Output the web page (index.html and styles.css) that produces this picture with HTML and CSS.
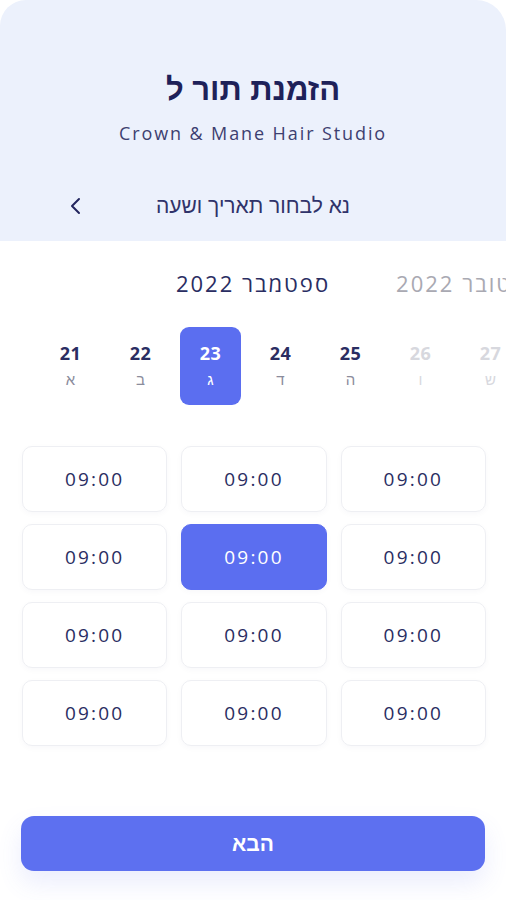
FILE: index.html
```html
<!DOCTYPE html>
<html lang="he" dir="rtl">
<head>
    <meta charset="UTF-8">
    <title>הזמנת תור</title>
    <link rel="stylesheet" href="styles.css">
</head>
<body>
<div class="card">
    <div class="head">
        <h1 class="title">הזמנת תור ל</h1>
        <p class="sub" dir="ltr">Crown &amp; Mane Hair Studio</p>
        <div class="nav">
            <span class="back">
                <svg width="14" height="18" viewBox="0 0 14 18"><path d="M10 2 L3 9 L10 16" fill="none" stroke="#23265e" stroke-width="2" stroke-linecap="round" stroke-linejoin="round"/></svg>
            </span>
            <span class="nav-text">נא לבחור תאריך ושעה</span>
            <span></span>
        </div>
    </div>

    <div class="months">
        <span></span>
        <span class="month current" dir="rtl">ספטמבר 2022</span>
        <span class="next"><span class="month" dir="rtl">אוקטובר 2022</span></span>
    </div>

    <ul class="days">
        <li><b>21</b><i>א</i></li>
        <li><b>22</b><i>ב</i></li>
        <li class="active"><b>23</b><i>ג</i></li>
        <li><b>24</b><i>ד</i></li>
        <li><b>25</b><i>ה</i></li>
        <li class="off"><b>26</b><i>ו</i></li>
        <li class="off"><b>27</b><i>ש</i></li>
    </ul>

    <div class="times">
        <div class="slot">09:00</div>
        <div class="slot">09:00</div>
        <div class="slot">09:00</div>
        <div class="slot">09:00</div>
        <div class="slot active">09:00</div>
        <div class="slot">09:00</div>
        <div class="slot">09:00</div>
        <div class="slot">09:00</div>
        <div class="slot">09:00</div>
        <div class="slot">09:00</div>
        <div class="slot">09:00</div>
        <div class="slot">09:00</div>
    </div>

    <button class="next-btn">הבא</button>
</div>
</body>
</html>
```

FILE: styles.css
```css
* {
    padding: 0;
    margin: 0;
    list-style: none;
    border: 0;
    box-sizing: border-box;
}

body {
    background: #fff;
    font-family: "Open Sans", "Liberation Sans", sans-serif;
    color: #23265e;
}

.card {
    width: 506px;
    min-height: 900px;
    background: #fff;
    border-radius: 26px 30px 0 0;
    overflow: hidden;
}

/* header */
.head {
    background: #ecf1fc;
    padding: 72px 0 23px;
    text-align: center;
}

.title {
    font-family: "Liberation Sans", sans-serif;
    font-size: 31px;
    font-weight: bold;
    line-height: 36px;
    color: #1e2159;
}

.sub {
    margin-top: 13px;
    font-size: 18px;
    line-height: 24px;
    letter-spacing: 1.9px;
    color: #3d4070;
}

.nav {
    direction: ltr;
    margin-top: 49px;
    display: grid;
    grid-template-columns: 1fr auto 1fr;
    align-items: center;
    line-height: 24px;
}

.back {
    justify-self: start;
    padding-left: 69px;
    display: flex;
}

.nav-text {
    direction: rtl;
    font-family: "Liberation Sans", sans-serif;
    font-size: 21px;
    color: #30336a;
}

/* months */
.months {
    direction: ltr;
    margin-top: 28px;
    display: grid;
    grid-template-columns: 1fr auto 1fr;
    line-height: 28px;
    font-size: 22px;
    letter-spacing: 2px;
}

.month {
    white-space: nowrap;
    display: inline-block;
}

.month.current {
    color: #2a2d62;
}

.next {
    overflow: hidden;
    white-space: nowrap;
    padding-left: 66px;
    color: #a9a9b2;
}

/* date strip */
.days {
    direction: ltr;
    margin-top: 30px;
    display: flex;
    gap: 9px;
    padding-left: 40px;
    overflow: hidden;
}

.days li {
    flex: 0 0 61px;
    height: 78px;
    border-radius: 9px;
    display: flex;
    flex-direction: column;
    align-items: center;
    padding-top: 14px;
}

.days b {
    font-size: 18px;
    line-height: 24px;
    font-weight: bold;
    letter-spacing: 0.5px;
    color: #2a2d62;
}

.days i {
    margin-top: 5px;
    font-style: normal;
    font-family: "Liberation Sans", sans-serif;
    font-size: 15px;
    line-height: 20px;
    color: #8b8c9c;
}

.days li.active {
    background: #5b6ef0;
}

.days li.active b,
.days li.active i {
    color: #fff;
}

.days li.off b,
.days li.off i {
    color: #d7d8de;
}

/* time slots */
.times {
    direction: ltr;
    margin-top: 41px;
    padding: 0 20px 0 22px;
    display: grid;
    grid-template-columns: repeat(3, 1fr);
    gap: 12px 14px;
}

.slot {
    height: 66px;
    border: 1px solid #eeeff3;
    border-radius: 10px;
    box-shadow: 0 2px 6px rgba(30, 35, 90, 0.03);
    display: flex;
    align-items: center;
    justify-content: center;
    font-size: 19px;
    letter-spacing: 2.2px;
    color: #2a2d62;
}

.slot.active {
    background: #5b6ef0;
    border-color: #5b6ef0;
    color: #fff;
}

/* bottom button */
.next-btn {
    display: block;
    margin: 70px 21px 0 21px;
    width: 464px;
    height: 55px;
    border-radius: 13px;
    background: #5d70f0;
    color: #fff;
    font-family: "Liberation Sans", sans-serif;
    font-size: 21px;
    font-weight: bold;
    box-shadow: 0 12px 24px rgba(91, 110, 240, 0.12);
    cursor: pointer;
}
```
